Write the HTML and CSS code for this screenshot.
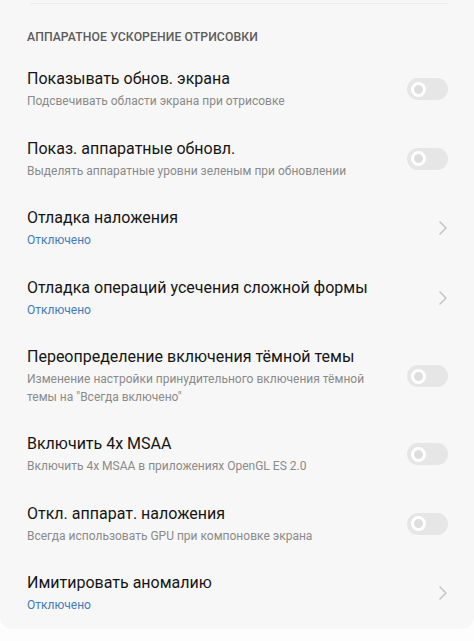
FILE: index.html
```html
<!DOCTYPE html>
<html lang="ru">
<head>
<meta charset="utf-8">
<link rel="stylesheet" href="styles.css">
</head>
<body>
<div class="card">
  <div class="topline"></div>
  <div class="section-title">АППАРАТНОЕ УСКОРЕНИЕ ОТРИСОВКИ</div>

  <div class="row">
    <div class="text">
      <div class="title">Показывать обнов. экрана</div>
      <div class="sub">Подсвечивать области экрана при отрисовке</div>
    </div>
    <div class="toggle"><span class="knob"></span></div>
  </div>

  <div class="row">
    <div class="text">
      <div class="title">Показ. аппаратные обновл.</div>
      <div class="sub">Выделять аппаратные уровни зеленым при обновлении</div>
    </div>
    <div class="toggle"><span class="knob"></span></div>
  </div>

  <div class="row">
    <div class="text">
      <div class="title">Отладка наложения</div>
      <div class="sub value">Отключено</div>
    </div>
    <svg class="chev" width="10" height="16" viewBox="0 0 10 16"><path d="M2 2 L8 8 L2 14" fill="none" stroke="#c4c4c4" stroke-width="1.5" stroke-linecap="round" stroke-linejoin="round"/></svg>
  </div>

  <div class="row">
    <div class="text">
      <div class="title">Отладка операций усечения сложной формы</div>
      <div class="sub value">Отключено</div>
    </div>
    <svg class="chev" width="10" height="16" viewBox="0 0 10 16"><path d="M2 2 L8 8 L2 14" fill="none" stroke="#c4c4c4" stroke-width="1.5" stroke-linecap="round" stroke-linejoin="round"/></svg>
  </div>

  <div class="row">
    <div class="text">
      <div class="title">Переопределение включения тёмной темы</div>
      <div class="sub">Изменение настройки принудительного включения тёмной темы на "Всегда включено"</div>
    </div>
    <div class="toggle"><span class="knob"></span></div>
  </div>

  <div class="row">
    <div class="text">
      <div class="title">Включить 4x MSAA</div>
      <div class="sub">Включить 4x MSAA в приложениях OpenGL ES 2.0</div>
    </div>
    <div class="toggle"><span class="knob"></span></div>
  </div>

  <div class="row">
    <div class="text">
      <div class="title">Откл. аппарат. наложения</div>
      <div class="sub">Всегда использовать GPU при компоновке экрана</div>
    </div>
    <div class="toggle"><span class="knob"></span></div>
  </div>

  <div class="row">
    <div class="text">
      <div class="title">Имитировать аномалию</div>
      <div class="sub value">Отключено</div>
    </div>
    <svg class="chev" width="10" height="16" viewBox="0 0 10 16"><path d="M2 2 L8 8 L2 14" fill="none" stroke="#c4c4c4" stroke-width="1.5" stroke-linecap="round" stroke-linejoin="round"/></svg>
  </div>
</div>
</body>
</html>
```

FILE: styles.css
```css
* { box-sizing: border-box; }
html, body {
  margin: 0;
  padding: 0;
  background: #fdfdfd;
  font-family: Roboto, "Noto Sans", sans-serif;
}
.card {
  background: #f7f7f7;
  height: 629px;
  border-radius: 0 0 12px 12px;
  padding: 3px 0 0 0;
}
.topline {
  height: 1px;
  margin: 0 26px 0 30px;
  background: #ececec;
}
.section-title {
  font-size: 12.2px;
  font-weight: 500;
  color: #5c5c5c;
  padding: 25px 27px 0;
  margin-bottom: 9.5px;
  line-height: 16px;
  letter-spacing: 0.1px;
}
.row {
  display: flex;
  align-items: center;
  padding: 13.5px 26px 13.5px 27px;
  gap: 12px;
}
.text { flex: 1; min-width: 0; }
.title {
  font-size: 16px;
  color: #151515;
  line-height: 22px;
}
.sub {
  font-size: 12px;
  color: #8a8a8a;
  line-height: 17.5px;
  margin-top: 3px;
  padding-right: 30px;
}
.value { color: #3c7bc0; }
.toggle {
  width: 41px;
  height: 22px;
  border-radius: 11px;
  background: #e6e6e6;
  display: flex;
  align-items: center;
  padding-left: 4px;
  flex: none;
}
.knob {
  width: 15px;
  height: 15px;
  border-radius: 50%;
  border: 3.5px solid #fff;
  background: #dedede;
}
.chev { flex: none; }
```
